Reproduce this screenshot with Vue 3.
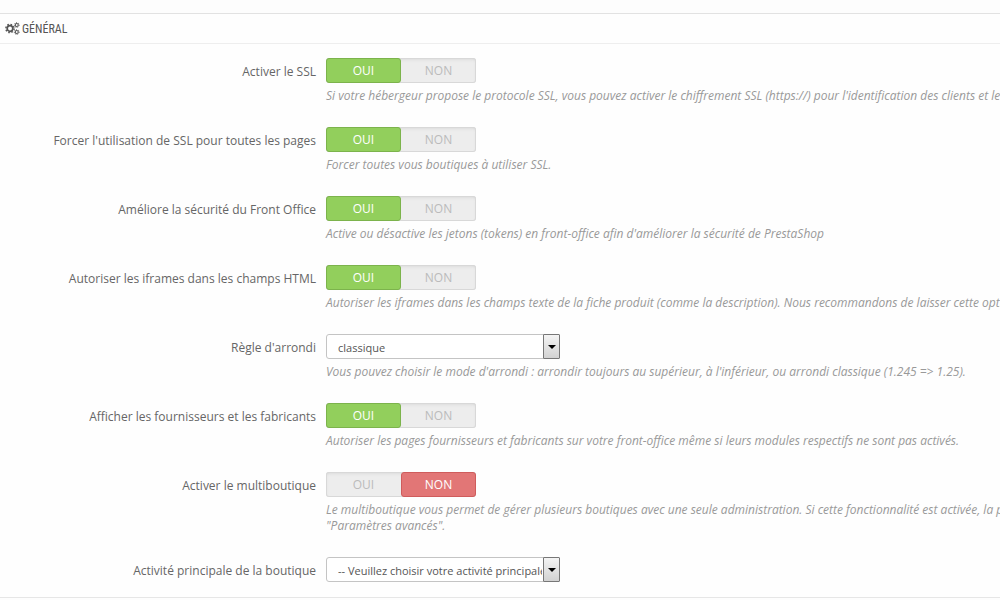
<template>
  <form class="panel" @submit.prevent>
    <h3 class="panel-heading">
      <svg class="cogs" viewBox="0 0 30 26" aria-hidden="true">
        <g fill="none" stroke="#555">
          <circle cx="10" cy="13" r="5.6" stroke-width="3.4" />
          <circle cx="10" cy="13" r="8.2" stroke-width="3" stroke-dasharray="3.22 3.22" />
          <circle cx="23.5" cy="6" r="3" stroke-width="2.2" />
          <circle cx="23.5" cy="6" r="4.8" stroke-width="1.8" stroke-dasharray="1.9 1.9" />
          <circle cx="23.5" cy="20" r="3" stroke-width="2.2" />
          <circle cx="23.5" cy="20" r="4.8" stroke-width="1.8" stroke-dasharray="1.9 1.9" />
        </g>
      </svg>
      <span>GÉNÉRAL</span>
    </h3>

    <div class="form-wrapper">
      <div v-for="field in fields" :key="field.name" class="form-group">
        <label
          class="control-label"
          :id="field.name + '_label'"
          :for="field.options ? field.name : field.name + '_on'"
        >
          {{ field.label }}
        </label>
        <div class="field">
          <div v-if="field.options" class="select-box">
            <select :id="field.name" v-model="field.value">
              <option v-for="option in field.options" :key="option" :value="option">
                {{ option }}
              </option>
            </select>
            <span class="select-arrow"></span>
          </div>
          <div v-else class="switch" role="radiogroup" :aria-labelledby="field.name + '_label'">
            <input
              type="radio"
              :id="field.name + '_on'"
              :name="field.name"
              :value="true"
              v-model="field.value"
            />
            <label class="on" :for="field.name + '_on'">OUI</label>
            <input
              type="radio"
              :id="field.name + '_off'"
              :name="field.name"
              :value="false"
              v-model="field.value"
            />
            <label class="off" :for="field.name + '_off'">NON</label>
          </div>
          <p v-if="field.help" class="help-block">{{ field.help }}</p>
        </div>
      </div>
    </div>
  </form>
</template>

<script setup>
import { ref } from "vue";

const fields = ref([
  {
    name: "ssl_enabled",
    label: "Activer le SSL",
    value: true,
    help: "Si votre hébergeur propose le protocole SSL, vous pouvez activer le chiffrement SSL (https://) pour l'identification des clients et le",
  },
  {
    name: "ssl_everywhere",
    label: "Forcer l'utilisation de SSL pour toutes les pages",
    value: true,
    help: "Forcer toutes vous boutiques à utiliser SSL.",
  },
  {
    name: "token_enable",
    label: "Améliore la sécurité du Front Office",
    value: true,
    help: "Active ou désactive les jetons (tokens) en front-office afin d'améliorer la sécurité de PrestaShop",
  },
  {
    name: "allow_iframe",
    label: "Autoriser les iframes dans les champs HTML",
    value: true,
    help: "Autoriser les iframes dans les champs texte de la fiche produit (comme la description). Nous recommandons de laisser cette opti",
  },
  {
    name: "round_mode",
    label: "Règle d'arrondi",
    value: "classique",
    options: ["supérieur", "inférieur", "classique"],
    help: "Vous pouvez choisir le mode d'arrondi : arrondir toujours au supérieur, à l'inférieur, ou arrondi classique (1.245 => 1.25).",
  },
  {
    name: "display_suppliers",
    label: "Afficher les fournisseurs et les fabricants",
    value: true,
    help: "Autoriser les pages fournisseurs et fabricants sur votre front-office même si leurs modules respectifs ne sont pas activés.",
  },
  {
    name: "multishop_active",
    label: "Activer le multiboutique",
    value: false,
    help: "Le multiboutique vous permet de gérer plusieurs boutiques avec une seule administration. Si cette fonctionnalité est activée, la p\n\"Paramètres avancés\".",
  },
  {
    name: "shop_activity",
    label: "Activité principale de la boutique",
    value: "-- Veuillez choisir votre activité principale --",
    options: ["-- Veuillez choisir votre activité principale --"],
  },
]);
</script>

<style>
body {
  margin: 0;
  background: #fdfdfd;
}
</style>

<style scoped>
.panel {
  margin-top: 13px;
  border-top: 1px solid #e2e2e2;
  border-bottom: 1px solid #e6e6e6;
  background: #fefefe;
  font-family: "Open Sans", sans-serif;
  font-size: 12px;
  color: #666;
  overflow: hidden;
}

.panel-heading {
  display: flex;
  align-items: center;
  gap: 2px;
  height: 29px;
  margin: 0;
  padding-left: 5px;
  border-bottom: 1px solid #eee;
  font-family: "Ubuntu Condensed", "Roboto Condensed", "Open Sans", sans-serif;
  font-size: 12px;
  font-weight: normal;
  color: #555;
}

.cogs {
  width: 15px;
  height: 13px;
}

.form-wrapper {
  display: flex;
  flex-direction: column;
  gap: 23px;
  padding: 14px 0 15px;
}

.form-group {
  display: grid;
  grid-template-columns: 32% minmax(0, 1fr);
}

.control-label {
  padding-right: 4px;
  line-height: 27px;
  height: 25px;
  text-align: right;
}

.field {
  padding-left: 6px;
}

.switch {
  display: flex;
  position: relative;
  width: 150px;
  height: 25px;
  border-radius: 3px;
  background: #ededed;
  box-shadow: inset 0 0 0 1px #d8d8d8, inset 0 2px 3px #dcdcdc;
}

.switch input {
  position: absolute;
  opacity: 0;
  margin: 0;
}

.switch label {
  flex: 1;
  box-sizing: border-box;
  border: 1px solid transparent;
  border-radius: 3px;
  line-height: 23px;
  text-align: center;
  color: #bbb;
  cursor: pointer;
}

.switch input:checked + label {
  color: #fff;
}

.switch input:checked + .on {
  background: #92cf5c;
  border-color: #7cb34c;
}

.switch input:checked + .off {
  background: #e27676;
  border-color: #cf5c5c;
}

.select-box {
  position: relative;
  width: 234px;
  height: 25px;
}

.select-box select {
  appearance: none;
  box-sizing: border-box;
  width: 100%;
  height: 100%;
  padding: 2px 17px 0 11px;
  border: 1px solid #c4c4c4;
  border-radius: 3px;
  background: #fff;
  font-family: inherit;
  font-size: 11px;
  color: #555;
}

.select-arrow {
  position: absolute;
  top: 0;
  right: 0;
  bottom: 0;
  display: flex;
  align-items: center;
  justify-content: center;
  box-sizing: border-box;
  width: 17px;
  border: 1px solid #777;
  border-radius: 1px;
  background: linear-gradient(#f4f4f4, #d2d2d2);
  pointer-events: none;
}

.select-arrow::after {
  content: "";
  border: 4px solid transparent;
  border-top-color: #000;
  border-bottom: 0;
}

.help-block {
  margin: 5px 0 0;
  font-size: 12px;
  font-style: italic;
  line-height: 16px;
  white-space: pre;
  color: #999;
}
</style>
